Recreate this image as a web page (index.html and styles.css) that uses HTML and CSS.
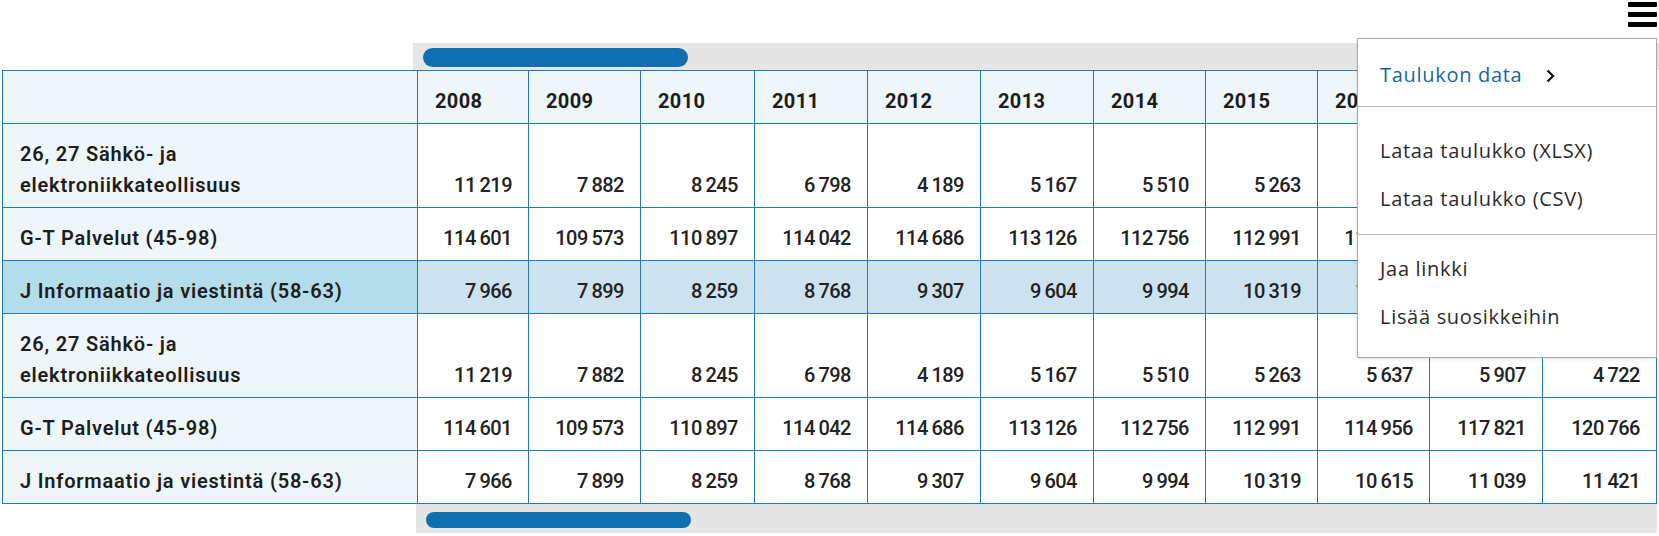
FILE: index.html
```html
<!DOCTYPE html>
<html lang="fi">
<head>
<meta charset="utf-8">
<title>Taulukko</title>
<link rel="stylesheet" href="styles.css">
</head>
<body>
<div class="topbar">
  <button class="menu-btn" aria-label="Valikko"><span></span><span></span><span></span></button>
</div>
<div class="scrolltrack top"><div class="thumb"></div></div>
<table class="data">
  <colgroup>
    <col class="c-label">
    <col style="width:111px"><col style="width:112px"><col style="width:114px"><col style="width:113px"><col style="width:113px"><col style="width:113px"><col style="width:112px"><col style="width:112px"><col style="width:112px"><col style="width:113px"><col style="width:114px">
  </colgroup>
  <thead>
    <tr>
      <th class="label"></th>
      <th>2008</th><th>2009</th><th>2010</th><th>2011</th><th>2012</th><th>2013</th><th>2014</th><th>2015</th><th>2016</th><th>2017</th><th>2018</th>
    </tr>
  </thead>
  <tbody>
    <tr>
      <td class="label">26, 27 Sähkö- ja<br>elektroniikkateollisuus</td>
      <td>11&#8201;219</td><td>7&#8201;882</td><td>8&#8201;245</td><td>6&#8201;798</td><td>4&#8201;189</td><td>5&#8201;167</td><td>5&#8201;510</td><td>5&#8201;263</td><td>5&#8201;637</td><td>5&#8201;907</td><td>4&#8201;722</td>
    </tr>
    <tr>
      <td class="label">G-T Palvelut (45-98)</td>
      <td>114&#8201;601</td><td>109&#8201;573</td><td>110&#8201;897</td><td>114&#8201;042</td><td>114&#8201;686</td><td>113&#8201;126</td><td>112&#8201;756</td><td>112&#8201;991</td><td>114&#8201;956</td><td>117&#8201;821</td><td>120&#8201;766</td>
    </tr>
    <tr class="hl">
      <td class="label">J Informaatio ja viestintä (58-63)</td>
      <td>7&#8201;966</td><td>7&#8201;899</td><td>8&#8201;259</td><td>8&#8201;768</td><td>9&#8201;307</td><td>9&#8201;604</td><td>9&#8201;994</td><td>10&#8201;319</td><td>10&#8201;615</td><td>11&#8201;039</td><td>11&#8201;421</td>
    </tr>
    <tr>
      <td class="label">26, 27 Sähkö- ja<br>elektroniikkateollisuus</td>
      <td>11&#8201;219</td><td>7&#8201;882</td><td>8&#8201;245</td><td>6&#8201;798</td><td>4&#8201;189</td><td>5&#8201;167</td><td>5&#8201;510</td><td>5&#8201;263</td><td>5&#8201;637</td><td>5&#8201;907</td><td>4&#8201;722</td>
    </tr>
    <tr>
      <td class="label">G-T Palvelut (45-98)</td>
      <td>114&#8201;601</td><td>109&#8201;573</td><td>110&#8201;897</td><td>114&#8201;042</td><td>114&#8201;686</td><td>113&#8201;126</td><td>112&#8201;756</td><td>112&#8201;991</td><td>114&#8201;956</td><td>117&#8201;821</td><td>120&#8201;766</td>
    </tr>
    <tr>
      <td class="label">J Informaatio ja viestintä (58-63)</td>
      <td>7&#8201;966</td><td>7&#8201;899</td><td>8&#8201;259</td><td>8&#8201;768</td><td>9&#8201;307</td><td>9&#8201;604</td><td>9&#8201;994</td><td>10&#8201;319</td><td>10&#8201;615</td><td>11&#8201;039</td><td>11&#8201;421</td>
    </tr>
  </tbody>
</table>
<div class="scrolltrack bottom"><div class="thumb"></div></div>

<div class="dropdown">
  <div class="menu-head">
    <span class="menu-title">Taulukon data</span>
    <svg class="chev" width="9" height="14" viewBox="0 0 9 14"><polyline points="1.5,1.5 7,7 1.5,12.5" fill="none" stroke="#111" stroke-width="2.2"/></svg>
  </div>
  <ul class="menu-group g1">
    <li>Lataa taulukko (XLSX)</li>
    <li>Lataa taulukko (CSV)</li>
  </ul>
  <ul class="menu-group g2">
    <li>Jaa linkki</li>
    <li>Lisää suosikkeihin</li>
  </ul>
</div>
</body>
</html>
```

FILE: styles.css
```css
body {
  margin: 0;
  font-family: Roboto, "Liberation Sans", sans-serif;
  color: #1d1d1b;
  background: #fff;
}

.topbar {
  height: 43px;
  box-sizing: border-box;
  padding: 2px 2px 0 0;
  display: flex;
  justify-content: flex-end;
}

.menu-btn {
  display: flex;
  flex-direction: column;
  gap: 5px;
  padding: 0;
  border: none;
  background: none;
}
.menu-btn span {
  display: block;
  width: 29px;
  height: 5px;
  background: #000;
  border-radius: 1px;
}

.scrolltrack {
  margin-left: 413px;
  height: 27px;
  box-sizing: border-box;
  padding: 5px 0 0 10px;
  background: #e6e6e6;
}
.thumb {
  width: 265px;
  height: 19px;
  border-radius: 10px;
  background: #0e70b0;
}
.scrolltrack.bottom {
  margin-left: 416px;
  margin-right: 2px;
  height: 29px;
  padding-top: 8px;
}
.scrolltrack.bottom .thumb {
  height: 16px;
}

.data {
  border-collapse: collapse;
  table-layout: fixed;
  width: 1655px;
  margin-left: 2px;
}
.c-label { width: 415px; }

.data th,
.data td {
  border: 1px solid #2079b8;
  padding: 15px 16px 6px 17px;
  line-height: 31px;
  font-size: 20px;
  vertical-align: bottom;
  white-space: nowrap;
}
.data th {
  text-align: left;
  font-weight: 700;
  letter-spacing: 0.4px;
  background: #eef6fa;
}
.data td {
  text-align: right;
  font-weight: 500;
  letter-spacing: -0.5px;
  color: #222;
}
.data td.label {
  text-align: left;
  font-weight: 600;
  letter-spacing: 0.8px;
  color: #1d1d1b;
  background: #eef6fa;
}
.data tr.hl td {
  background: #cce2ee;
}
.data tr.hl td.label {
  background: #b5dcea;
}

.dropdown {
  position: absolute;
  top: 38px;
  left: 1357px;
  width: 298px;
  background: #fff;
  border: 1px solid #a9a9a9;
  box-shadow: 0 1px 3px rgba(0, 0, 0, 0.12);
  font-family: "Open Sans", Lato, sans-serif;
  font-size: 20px;
  letter-spacing: 0.7px;
  color: #2b2b2b;
}
.menu-head {
  display: flex;
  align-items: center;
  height: 48px;
  padding: 11px 22px 8px;
  border-bottom: 1px solid #b4b4b4;
}
.menu-title {
  color: #1567a3;
}
.chev {
  margin-left: 24px;
  margin-top: 3px;
}
.menu-group {
  list-style: none;
  margin: 0;
  padding: 20px 0 11px 22px;
}
.menu-group li {
  height: 48px;
  line-height: 48px;
}
.g1 {
  border-bottom: 1px solid #b4b4b4;
}
.g2 {
  padding: 10px 0 16px 22px;
}
```
